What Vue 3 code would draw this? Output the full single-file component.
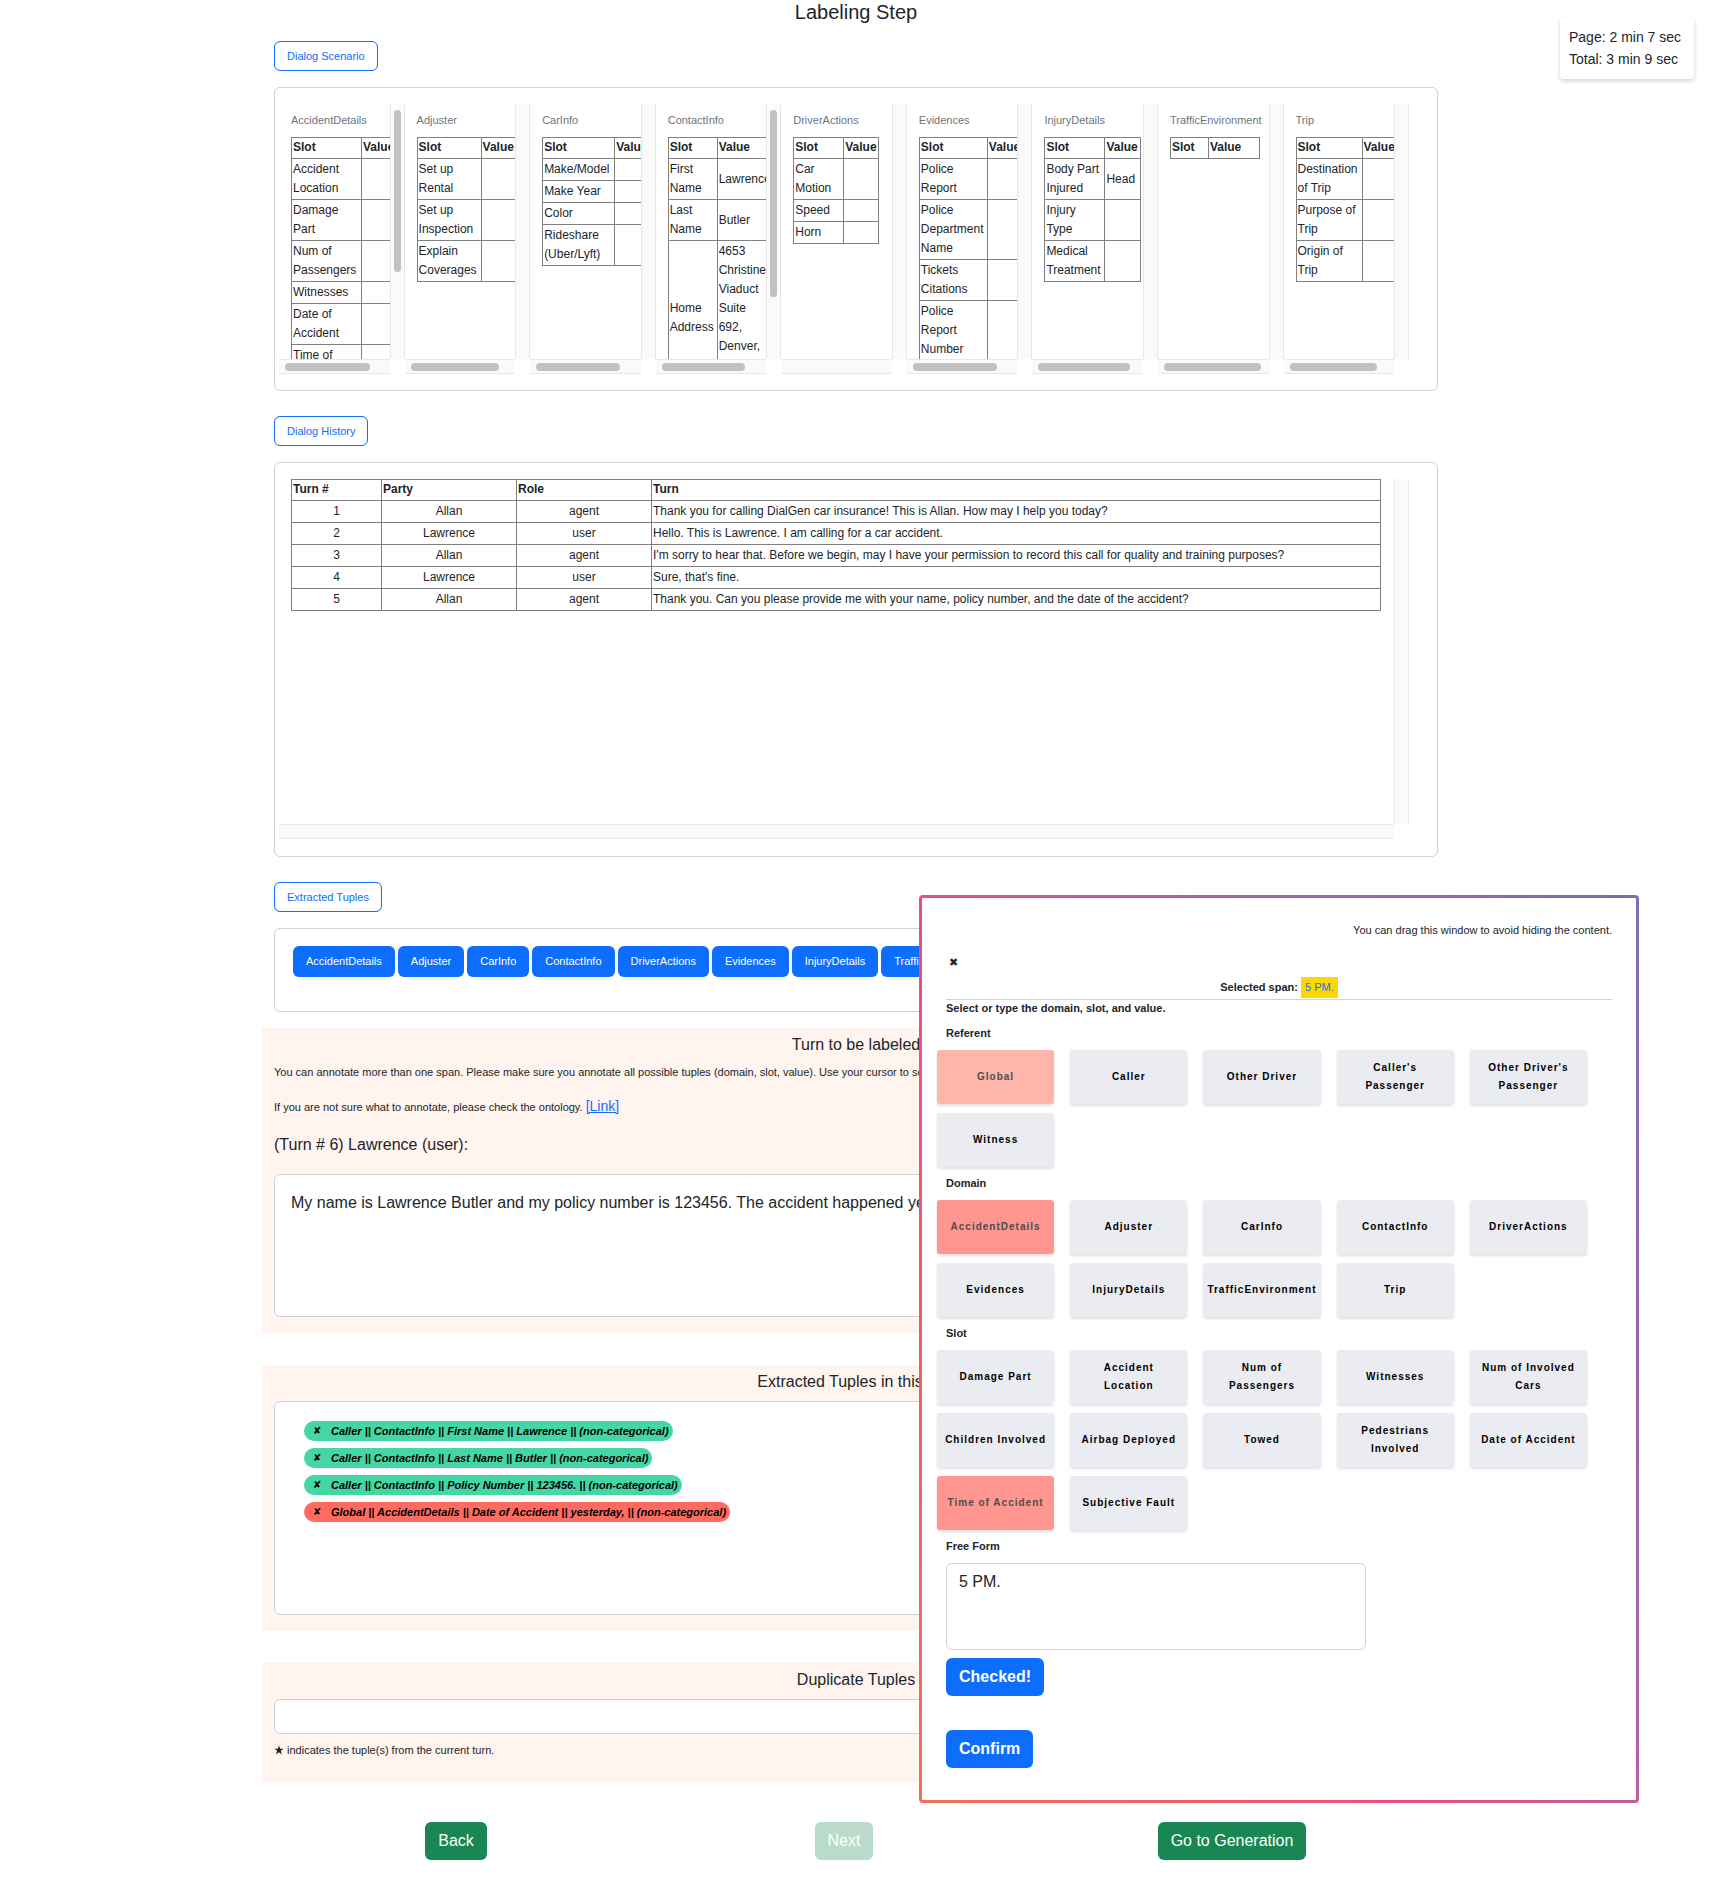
<script setup>
import { ref } from 'vue'

const empty = (...names) => names.map((slot) => ({ slot, value: '' }))

const scenario = [
  { name: 'AccidentDetails', slotWidth: 70, tableWidth: 114, thumb: 85, vThumb: 162, rows: empty('Accident Location', 'Damage Part', 'Num of Passengers', 'Witnesses', 'Date of Accident', 'Time of Accident') },
  { name: 'Adjuster', slotWidth: 64, tableWidth: 104, thumb: 88, vThumb: 0, rows: empty('Set up Rental', 'Set up Inspection', 'Explain Coverages') },
  { name: 'CarInfo', slotWidth: 72, tableWidth: 112, thumb: 84, vThumb: 0, rows: empty('Make/Model', 'Make Year', 'Color', 'Rideshare (Uber/Lyft)') },
  {
    name: 'ContactInfo', slotWidth: 49, tableWidth: 104, thumb: 83, vThumb: 187,
    rows: [
      { slot: 'First Name', value: 'Lawrence' },
      { slot: 'Last Name', value: 'Butler' },
      { slot: 'Home Address', value: '4653 Christine Viaduct Suite 692, Denver, Colorado 80202' },
    ],
  },
  { name: 'DriverActions', slotWidth: 50, tableWidth: 86, thumb: 0, vThumb: 0, rows: empty('Car Motion', 'Speed', 'Horn') },
  { name: 'Evidences', slotWidth: 68, tableWidth: 110, thumb: 84, vThumb: 0, rows: empty('Police Report', 'Police Department Name', 'Tickets Citations', 'Police Report Number') },
  {
    name: 'InjuryDetails', slotWidth: 60, tableWidth: 97, thumb: 92, vThumb: 0,
    rows: [{ slot: 'Body Part Injured', value: 'Head' }, ...empty('Injury Type', 'Medical Treatment')],
  },
  { name: 'TrafficEnvironment', slotWidth: 38, tableWidth: 90, thumb: 97, vThumb: 0, rows: [] },
  { name: 'Trip', slotWidth: 66, tableWidth: 106, thumb: 87, vThumb: 0, rows: empty('Destination of Trip', 'Purpose of Trip', 'Origin of Trip') },
]

const history = [
  ['Allan', 'agent', 'Thank you for calling DialGen car insurance! This is Allan. How may I help you today?'],
  ['Lawrence', 'user', 'Hello. This is Lawrence. I am calling for a car accident.'],
  ['Allan', 'agent', "I'm sorry to hear that. Before we begin, may I have your permission to record this call for quality and training purposes?"],
  ['Lawrence', 'user', "Sure, that's fine."],
  ['Allan', 'agent', 'Thank you. Can you please provide me with your name, policy number, and the date of the accident?'],
]

const domains = scenario.map((d) => d.name)

const tuples = [
  { text: 'Caller || ContactInfo || First Name || Lawrence || (non-categorical)', error: false },
  { text: 'Caller || ContactInfo || Last Name || Butler || (non-categorical)', error: false },
  { text: 'Caller || ContactInfo || Policy Number || 123456. || (non-categorical)', error: false },
  { text: 'Global || AccidentDetails || Date of Accident || yesterday, || (non-categorical)', error: true },
]

const groups = [
  { title: 'Referent', selected: 'Global', tone: 'soft', options: ['Global', 'Caller', 'Other Driver', "Caller's\nPassenger", "Other Driver's\nPassenger", 'Witness'] },
  { title: 'Domain', selected: 'AccidentDetails', tone: 'strong', options: domains },
  {
    title: 'Slot', selected: 'Time of Accident', tone: 'strong',
    options: ['Damage Part', 'Accident\nLocation', 'Num of\nPassengers', 'Witnesses', 'Num of Involved\nCars', 'Children Involved', 'Airbag Deployed', 'Towed', 'Pedestrians\nInvolved', 'Date of Accident', 'Time of Accident', 'Subjective Fault'],
  },
]

const freeForm = ref('5 PM.')
</script>

<template>
  <div class="page">
    <main class="container">
      <h1 class="title">Labeling Step</h1>

      <button type="button" class="btn-outline">Dialog Scenario</button>
      <section class="card scenario">
        <div v-for="d in scenario" :key="d.name" class="scroller">
          <div class="view">
            <h2 class="domain">{{ d.name }}</h2>
            <table class="grid-table" :style="{ width: d.tableWidth + 'px' }">
              <thead>
                <tr>
                  <th :style="{ width: d.slotWidth + 'px' }">Slot</th>
                  <th>Value</th>
                </tr>
              </thead>
              <tbody>
                <tr v-for="row in d.rows" :key="row.slot">
                  <td>{{ row.slot }}</td>
                  <td>{{ row.value }}</td>
                </tr>
              </tbody>
            </table>
          </div>
          <div class="v-track"><div v-if="d.vThumb" class="v-thumb" :style="{ height: d.vThumb + 'px' }"></div></div>
          <div class="h-track"><div v-if="d.thumb" class="h-thumb" :style="{ width: d.thumb + 'px' }"></div></div>
        </div>
      </section>

      <button type="button" class="btn-outline">Dialog History</button>
      <section class="card history">
        <div class="scroller tall">
          <div class="view flush">
            <table class="grid-table turns">
              <thead>
                <tr>
                  <th class="c-turn">Turn #</th>
                  <th class="c-party">Party</th>
                  <th class="c-party">Role</th>
                  <th>Turn</th>
                </tr>
              </thead>
              <tbody>
                <tr v-for="(t, i) in history" :key="i">
                  <td class="mid">{{ i + 1 }}</td>
                  <td class="mid">{{ t[0] }}</td>
                  <td class="mid">{{ t[1] }}</td>
                  <td>{{ t[2] }}</td>
                </tr>
              </tbody>
            </table>
          </div>
          <div class="v-track"></div>
          <div class="h-track"></div>
        </div>
      </section>

      <button type="button" class="btn-outline">Extracted Tuples</button>
      <section class="card pills">
        <button v-for="d in domains" :key="d" type="button" class="pill">{{ d }}</button>
      </section>

      <section class="band">
        <h2 class="band-title">Turn to be labeled</h2>
        <p class="note">You can annotate more than one span. Please make sure you annotate all possible tuples (domain, slot, value). Use your cursor to select a span.</p>
        <p class="note link-note">If you are not sure what to annotate, please check the ontology. <a href="#">[Link]</a></p>
        <p class="speaker">(Turn # 6) Lawrence (user):</p>
        <div class="box turn-box">My name is Lawrence Butler and my policy number is 123456. The accident happened yesterday, 5 PM.</div>
      </section>

      <section class="band">
        <h2 class="band-title">Extracted Tuples in this turn</h2>
        <ul class="box tuple-box">
          <li v-for="t in tuples" :key="t.text" class="tag" :class="{ error: t.error }">
            <button type="button" class="remove" aria-label="Remove tuple">✘</button>{{ t.text }}
          </li>
        </ul>
      </section>

      <section class="band last">
        <h2 class="band-title">Duplicate Tuples</h2>
        <div class="box empty-box"></div>
        <p class="note star-note">
          <svg class="star" viewBox="0 0 12 12" aria-hidden="true"><path d="M6 .5 7.4 4.5h4.2L8.2 7l1.3 4.3L6 8.7l-3.5 2.6L3.8 7 .4 4.5h4.2z" /></svg>
          indicates the tuple(s) from the current turn.
        </p>
      </section>

      <nav class="actions">
        <div><button type="button" class="btn green">Back</button></div>
        <div><button type="button" class="btn green" disabled>Next</button></div>
        <div><button type="button" class="btn green">Go to Generation</button></div>
      </nav>
    </main>

    <aside class="timer">
      <div>Page: 2 min 7 sec</div>
      <div>Total: 3 min 9 sec</div>
    </aside>

    <div class="dialog" role="dialog" aria-label="Annotate span">
      <p class="drag">You can drag this window to avoid hiding the content.</p>
      <button type="button" class="close" aria-label="Close">✖</button>
      <p class="span-line"><b>Selected span:</b> <mark>5 PM.</mark></p>
      <p class="label first">Select or type the domain, slot, and value.</p>
      <section v-for="g in groups" :key="g.title">
        <h3 class="label">{{ g.title }}</h3>
        <div class="options">
          <button v-for="o in g.options" :key="o" type="button" class="option" :class="o === g.selected ? g.tone : ''">{{ o }}</button>
        </div>
      </section>
      <label class="label" for="free-form">Free Form</label>
      <textarea id="free-form" v-model="freeForm"></textarea>
      <div class="dialog-actions">
        <button type="button" class="btn blue">Checked!</button>
        <button type="button" class="btn blue">Confirm</button>
      </div>
    </div>
  </div>
</template>

<style>
body {
  background: #fff;
}
</style>

<style scoped>
* {
  box-sizing: border-box;
}
.page {
  position: relative;
  color: #212529;
  font: 16px/24px "Liberation Sans", Arial, sans-serif;
}
button {
  font-family: inherit;
  cursor: pointer;
}
h1, h2, h3, p, ul {
  margin: 0;
  padding: 0;
  font-weight: 400;
}
.container {
  max-width: 1188px;
  margin: 0 auto;
  padding-bottom: 16px;
}
.title {
  font-size: 20px;
  line-height: 24px;
  text-align: center;
  margin-bottom: 17px;
}
.btn-outline {
  display: block;
  margin: 0 12px 16px;
  padding: 6px 12px;
  border: 1px solid #0d6efd;
  border-radius: 6px;
  background: #fff;
  color: #0d6efd;
  font-size: 11px;
  line-height: 16px;
}
.card {
  margin: 0 12px 25px;
  border: 1px solid #d0d1d2;
  border-radius: 6px;
  background: #fff;
}
.scenario {
  display: flex;
  padding: 16px 28px 16px 4px;
}
.scroller {
  flex: 1;
  min-width: 0;
  display: grid;
  grid-template: 255px 15px / 1fr 15px;
}
.history {
  padding: 16px 28px 17px 4px;
}
.scroller.tall {
  grid-template-rows: 345px 15px;
}
.view {
  overflow: hidden;
  padding: 8px 0 0 12px;
}
.view.flush {
  padding: 0 13px 0 12px;
}
.v-track {
  border: solid #e8e8e8;
  border-width: 0 1px;
  background: #fafafa;
  padding: 6px 3px;
}
.v-thumb,
.h-thumb {
  border-radius: 4px;
  background: #c1c1c1;
}
.h-track {
  border: solid #e8e8e8;
  border-width: 1px 0;
  background: #fafafa;
  padding: 3px 6px;
}
.h-thumb {
  height: 8px;
}
.domain {
  color: #6c757d;
  font-size: 11px;
  line-height: 17px;
  margin-bottom: 8px;
}
.grid-table {
  border-collapse: collapse;
  table-layout: fixed;
  font-size: 12px;
  line-height: 19px;
}
.grid-table th,
.grid-table td {
  border: 1px solid #808080;
  padding: 1px;
  text-align: left;
  vertical-align: middle;
}
.grid-table th {
  padding-top: 0;
  font-weight: 700;
}
.grid-table.turns {
  width: 100%;
}
.c-turn {
  width: 90px;
}
.c-party {
  width: 135px;
}
.grid-table td.mid {
  text-align: center;
}
.pills {
  display: flex;
  gap: 3px;
  padding: 17px 18px 34px;
  margin-bottom: 16px;
}
.pill {
  border: 0;
  border-radius: 6px;
  background: #0d6efd;
  color: #fff;
  padding: 7px 13px;
  font-size: 11px;
  line-height: 17px;
}
.band {
  background: #fff4ee;
  padding: 7px 12px 16px;
  margin-bottom: 32px;
}
.band-title {
  font-size: 16px;
  line-height: 19px;
  text-align: center;
  margin-bottom: 10px;
}
.note {
  font-size: 11px;
  line-height: 17px;
}
.link-note {
  line-height: 22px;
  margin: 14px 0 15px;
}
.link-note a {
  color: #0d6efd;
  font-size: 14px;
}
.speaker {
  margin-bottom: 17px;
}
.box {
  border: 1px solid #d0d1d2;
  border-radius: 6px;
  background: #fff;
}
.turn-box {
  min-height: 143px;
  padding: 16px;
}
.tuple-box {
  list-style: none;
  min-height: 214px;
  padding: 19px 29px;
  display: flex;
  flex-direction: column;
  align-items: flex-start;
  gap: 7px;
}
.tag {
  display: flex;
  align-items: center;
  height: 20px;
  border-radius: 10px;
  background: #44d7a5;
  color: #000;
  padding: 0 4px 0 9px;
  font: italic bold 11px/20px "Liberation Sans", Arial, sans-serif;
}
.tag.error {
  background: #ff6b61;
}
.remove {
  border: 0;
  background: none;
  padding: 0;
  width: 18px;
  color: #000;
  text-align: left;
  font: 10px/20px "DejaVu Sans", sans-serif;
}
.empty-box {
  height: 35px;
}
.star-note {
  padding: 8px 0 7px;
}
.star {
  width: 10px;
  height: 10px;
  vertical-align: -1px;
  fill: #212529;
}
.last {
  margin-bottom: 40px;
}
.actions {
  display: grid;
  grid-template-columns: repeat(3, 1fr);
  padding-right: 24px;
  text-align: center;
}
.btn {
  border: 0;
  border-radius: 6px;
  color: #fff;
  padding: 7px 13px;
  font-size: 16px;
  line-height: 24px;
}
.green {
  background: #198754;
}
.green:disabled {
  background: #badbcc;
}
.blue {
  background: #0d6efd;
  font-weight: 700;
}
.timer {
  position: absolute;
  top: 17px;
  right: 18px;
  min-width: 134px;
  padding: 9px;
  border-radius: 4px;
  background: #fff;
  box-shadow: 0 2px 4px rgba(0, 0, 0, 0.18);
  font-size: 14px;
  line-height: 22px;
}
.dialog {
  position: absolute;
  top: 895px;
  right: 73px;
  width: 720px;
  padding: 24px 24px 32px;
  border: 3px solid transparent;
  border-radius: 4px;
  background:
    linear-gradient(#fff, #fff) padding-box,
    linear-gradient(60deg, #f37055, #ef4e7b 38%, #a166ab 68%, #7f6cb1) border-box;
}
.drag {
  font-size: 11px;
  line-height: 17px;
  text-align: right;
}
.close {
  display: block;
  margin-top: 14px;
  padding: 0 3px;
  border: 0;
  background: none;
  color: #212529;
  font: 11px/20px "DejaVu Sans", sans-serif;
}
.span-line {
  margin-top: 4px;
  padding-bottom: 1px;
  border-bottom: 1px solid #d0d1d2;
  font-size: 11px;
  line-height: 21px;
  text-align: center;
}
.span-line mark {
  display: inline-block;
  padding: 0 4px;
  background: #ffd700;
  color: #1a73e8;
}
.label {
  display: block;
  font-size: 11px;
  font-weight: 700;
  line-height: 17px;
  margin: 8px 0;
}
.label.first {
  margin-top: 0;
}
.options {
  display: grid;
  grid-template-columns: repeat(5, 1fr);
  grid-auto-rows: 54px;
  gap: 9px 16px;
  margin: 0 25px 0 -9px;
}
.option {
  border: 0;
  border-radius: 3px;
  background: #ebecf2;
  box-shadow: 0 2px 3px rgba(0, 0, 0, 0.12);
  color: #000;
  padding: 0 2px;
  font-size: 10px;
  font-weight: 700;
  line-height: 18px;
  letter-spacing: 1px;
  white-space: pre-line;
}
.option.soft {
  background: #ffb5a9;
  color: #4d4d4d;
}
.option.strong {
  background: #ff968f;
  color: #4d4d4d;
}
textarea {
  display: block;
  width: 63%;
  height: 87px;
  padding: 6px 12px;
  border: 1px solid #ced4da;
  border-radius: 6px;
  resize: none;
  color: #212529;
  font: 16px/24px "Liberation Sans", Arial, sans-serif;
}
.dialog-actions {
  display: flex;
  flex-direction: column;
  align-items: flex-start;
  gap: 34px;
  margin-top: 8px;
}
</style>
